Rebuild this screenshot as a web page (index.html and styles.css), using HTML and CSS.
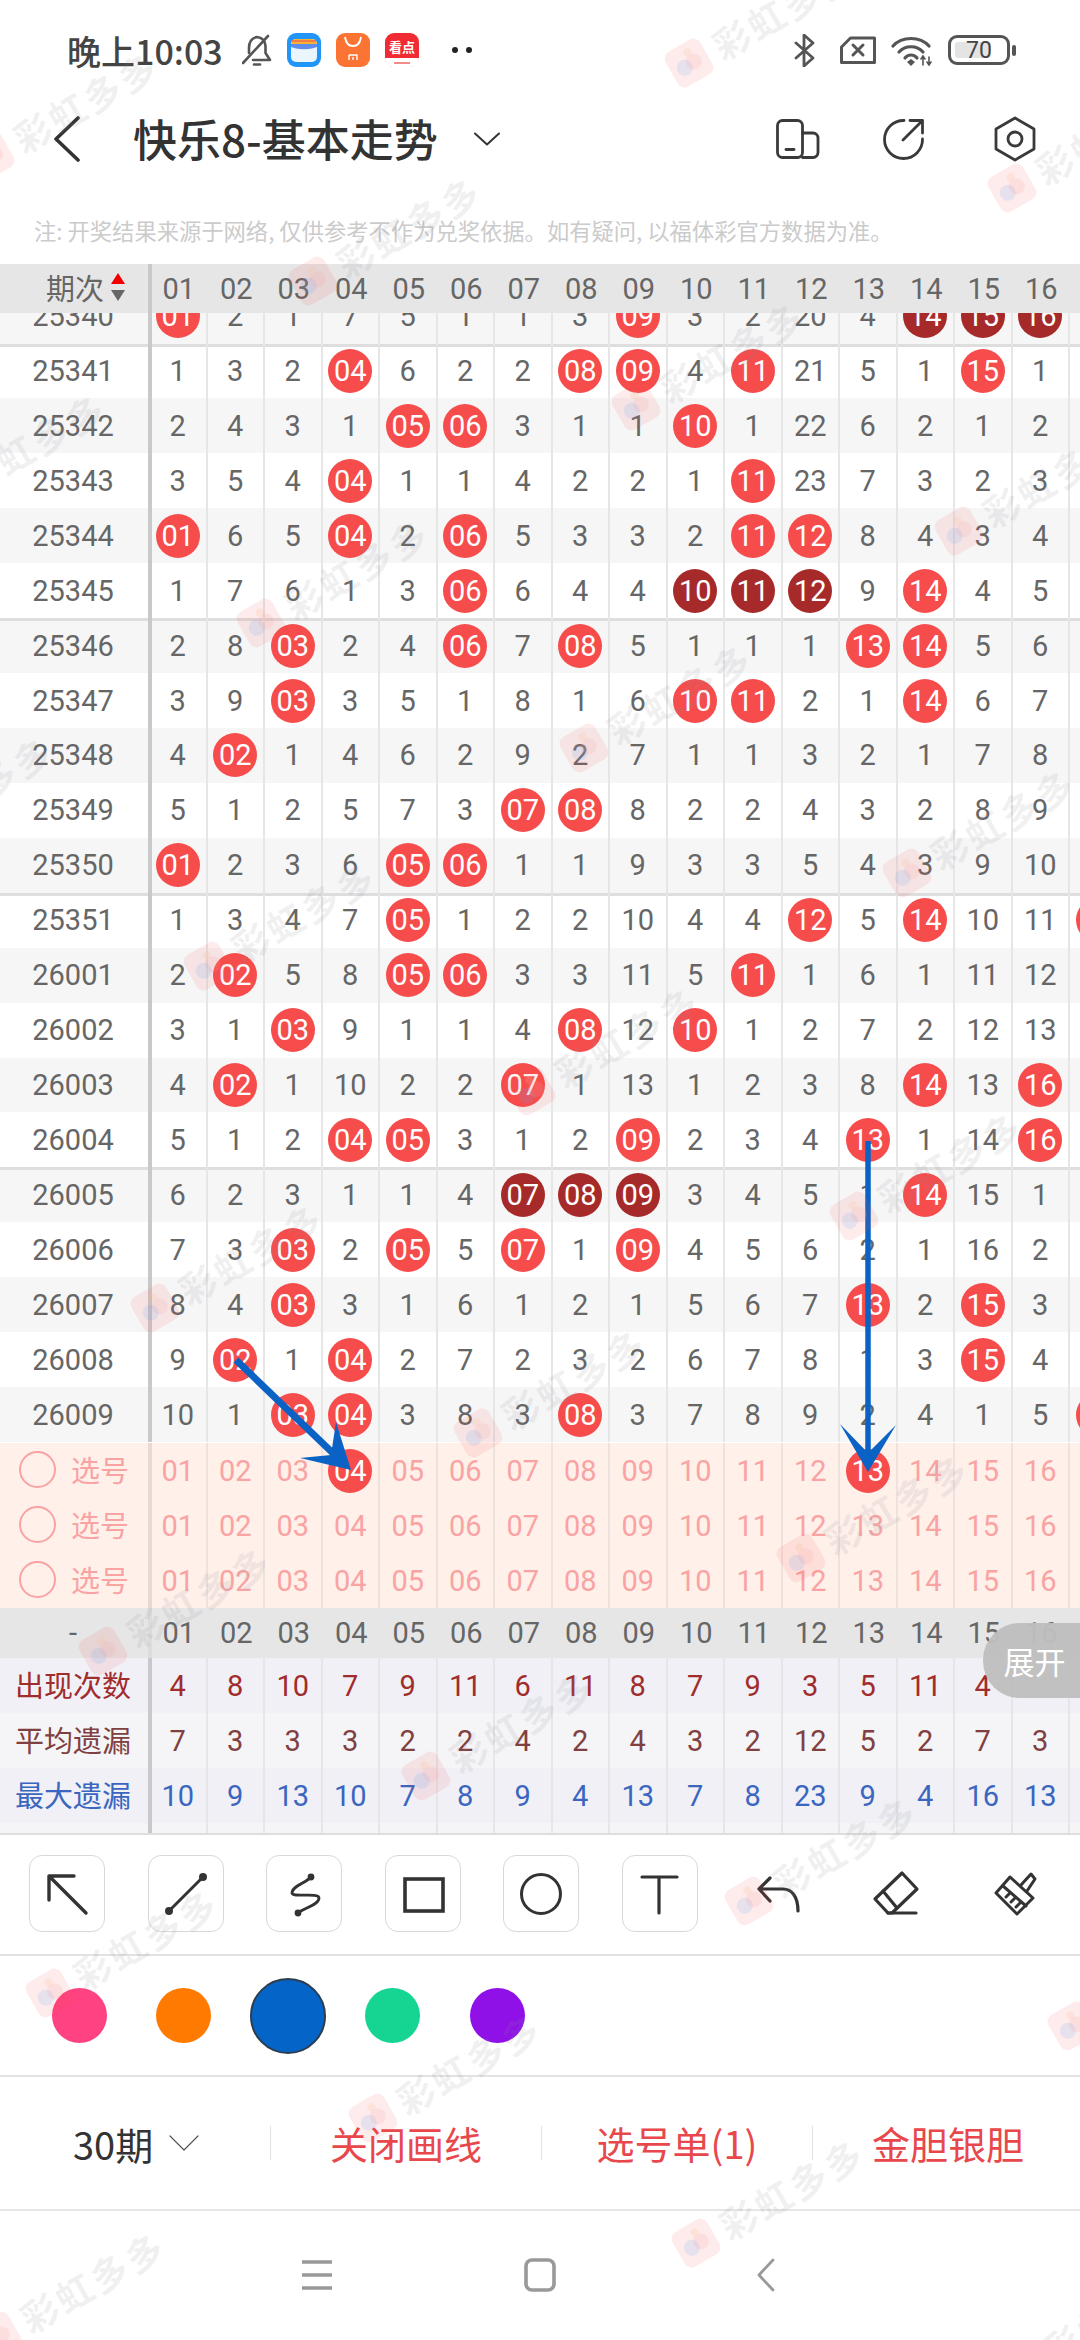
FILE: index.html
```html
<!DOCTYPE html>
<html lang="zh-CN">
<head>
    <meta charset="UTF-8">
    <meta name="viewport" content="width=device-width, initial-scale=1.0">
    <title>快乐8-基本走势</title>
    <link rel="stylesheet" href="styles.css">
</head>
<body>
    <header class="status-bar">
        <div class="status-left">
            <span class="status-time">晚上10:03</span>
            <svg class="bell" width="30" height="32" viewBox="0 0 30 32" fill="none" stroke="#555" stroke-width="2.6" stroke-linecap="round" stroke-linejoin="round"><path d="M7 19V14C7 8 10 4 15 3C20 3.5 23 7 23.500 12V19L28 26H11"/><path d="M12 30.500H18"/><path d="M1 29L26 2"/></svg>
            <svg class="app-icon" width="34" height="34" viewBox="0 0 34 34"><rect width="34" height="34" rx="9" fill="#2196f8"/><rect x="4" y="6" width="26" height="23" rx="5" fill="#eaf5fe"/><path d="M4 11a5 5 0 0 1 5-5h16a5 5 0 0 1 5 5z" fill="#f9b233"/><path d="M4 11h26v3c-8 3-18 3-26 0z" fill="#5e8df0"/><path d="M5 8h24" stroke="#ef6a4a" stroke-width="1.500"/></svg>
            <svg class="app-icon" width="34" height="34" viewBox="0 0 34 34"><rect width="34" height="34" rx="9" fill="#fb7434"/><path d="M9 4c1 7 4 9 8 9s7-2 8-9" fill="none" stroke="#fff" stroke-width="1.800"/><path d="M13 22h8v5M13 22v5M17 24v3" fill="none" stroke="#fff" stroke-width="1.400"/></svg>
            <svg class="app-icon" width="34" height="34" viewBox="0 0 34 34"><rect width="34" height="34" rx="9" fill="#f12b33"/><path d="M0 25h34v1a8 8 0 0 1-8 8H8a8 8 0 0 1-8-8z" fill="#fff"/><text class="app-icon-label" x="17" y="19">看点</text><path d="M9 30h16" stroke="#e66" stroke-width="1.500"/></svg>
            <span class="status-dots"><i></i><i></i></span>
        </div>
        <div class="status-right">
            <svg class="bluetooth" width="21" height="33" viewBox="0 0 21 33" fill="none" stroke="#555" stroke-width="2.800" stroke-linejoin="round" stroke-linecap="round"><path d="M2 9L19 24L10 32V1L19 9L2 24"/></svg>
            <svg width="36" height="28" viewBox="0 0 36 28" fill="none" stroke="#555" stroke-width="3" stroke-linejoin="round"><path d="M1.500 11L10.500 2H34.500V26.500H1.500Z"/><path d="M13 9L23 19M23 9L13 19" stroke-linecap="round"/></svg>
            <svg width="42" height="31" viewBox="0 0 42 31" fill="none" stroke="#555" stroke-width="3.200" stroke-linecap="round"><path d="M2 11C11 1 29 1 38 11"/><path d="M8 17C14 10 26 10 32 17"/><path d="M14 23C17 19 23 19 26 23"/><path d="M16 27L20 24L24 27L20 31Z" fill="#555" stroke="none"/><path d="M32 21V30M38 22V30M30 24L32 21L34 24M36 27L38 30L40 27" stroke-width="1.600"/></svg>
            <div class="battery"><div class="battery-body"><span class="battery-fill"></span><span class="battery-level">70</span></div><span class="battery-cap"></span></div>
        </div>
    </header>

    <nav class="title-bar">
        <svg width="26" height="46" viewBox="0 0 26 46" fill="none" stroke="#333" stroke-width="3.600" stroke-linecap="round" stroke-linejoin="round"><path d="M24 2L2 23L24 44"/></svg>
        <h1 class="page-title">快乐8-基本走势</h1>
        <svg class="title-caret" width="26" height="14" viewBox="0 0 26 14" fill="none" stroke="#333" stroke-width="2" stroke-linecap="round" stroke-linejoin="round"><path d="M1 1.500L13 12.500L25 1.500"/></svg>
        <div class="title-actions">
            <svg width="44" height="40" viewBox="0 0 44 40" fill="none" stroke="#3a3a3a" stroke-width="2.800" stroke-linecap="round" stroke-linejoin="round"><rect x="1.500" y="1.500" width="25" height="37" rx="5"/><path d="M26.500 14H37a5 5 0 0 1 5 5V33.500a5 5 0 0 1-5 5H26.500"/><path d="M10 30.500H18"/></svg>
            <svg width="42" height="42" viewBox="0 0 42 42" fill="none" stroke="#3a3a3a" stroke-width="2.800" stroke-linecap="round" stroke-linejoin="round"><path d="M22 2.500A19 19 0 1 0 40.500 21"/><path d="M21 22L40.500 2.500M28 2.500H40.500V15"/></svg>
            <svg class="settings-icon" width="42" height="46" viewBox="0 0 42 46" fill="none" stroke="#3a3a3a" stroke-width="2.800" stroke-linejoin="round"><path d="M21 2L40 13V33L21 44L2 33V13Z"/><circle cx="21" cy="23" r="7"/></svg>
        </div>
    </nav>

    <p class="notice">注: 开奖结果来源于网络, 仅供参考不作为兑奖依据。如有疑问, 以福体彩官方数据为准。</p>

    <section class="chart">
        <div class="chart-row chart-head" id="topHead">
            <div class="row-label sort-label">期次<span class="sort-arrows"><i class="sort-up"></i><i class="sort-down"></i></span></div>
        </div>
        <div class="chart-body" id="chartBody"></div>
        <div id="pickRows"></div>
        <div class="chart-row chart-head chart-head-low" id="lowHead">
            <div class="row-label">-</div>
        </div>
        <div class="stats" id="statRows"></div>
    </section>

    <section class="draw-tools">
        <button class="tool tool-boxed"><svg width="76" height="76" viewBox="0 0 76 76" fill="none" stroke="#333" stroke-width="3.400" stroke-linecap="round" stroke-linejoin="round"><path d="M20 44V20H45M20 20L57 57"/></svg></button>
        <button class="tool tool-boxed"><svg width="76" height="76" viewBox="0 0 76 76" fill="#333" stroke="#333" stroke-width="3" stroke-linecap="round"><path d="M21 55L55 21"/><circle cx="21" cy="55" r="2.500"/><circle cx="55" cy="21" r="2.500"/></svg></button>
        <button class="tool tool-boxed"><svg width="76" height="76" viewBox="0 0 76 76" fill="none" stroke="#333" stroke-width="2.800" stroke-linecap="round"><path d="M45 21C40 27 26 30 26 37C26 42 53 36 53 42C53 49 38 52 32 57"/><circle cx="45" cy="21" r="2" fill="#333"/><circle cx="32" cy="57" r="2" fill="#333"/></svg></button>
        <button class="tool tool-boxed"><svg width="76" height="76" viewBox="0 0 76 76" fill="none" stroke="#333" stroke-width="3.600"><rect x="20" y="23" width="38" height="32"/></svg></button>
        <button class="tool tool-boxed"><svg width="76" height="76" viewBox="0 0 76 76" fill="none" stroke="#333" stroke-width="3"><circle cx="38" cy="38" r="19.500"/></svg></button>
        <button class="tool tool-boxed"><svg width="76" height="76" viewBox="0 0 76 76" fill="none" stroke="#333" stroke-width="3.200" stroke-linecap="round"><path d="M20 21H55M37 21V57"/></svg></button>
        <button class="tool"><svg width="76" height="76" viewBox="0 0 76 76" fill="none" stroke="#333" stroke-width="3.200" stroke-linecap="round" stroke-linejoin="round"><path d="M29 22L18 33L29 45M18 33H42C51 33 57 41 57 55"/></svg></button>
        <button class="tool"><svg width="76" height="76" viewBox="0 0 76 76" fill="none" stroke="#333" stroke-width="3.200" stroke-linecap="round" stroke-linejoin="round"><path d="M43 17L58 33L33 57H29L16 43Z"/><path d="M24 35L38 52M29 57H57"/></svg></button>
        <button class="tool"><svg width="76" height="76" viewBox="0 0 76 76" fill="none" stroke="#333" stroke-width="3" stroke-linecap="round" stroke-linejoin="round"><path d="M18 37L32 21L55 42L39 58Z"/><path d="M43 29L53 18L57 23L49 35"/><path d="M25 30L48 50M28 41L32 37M33 46L37 42M38 51L42 47"/></svg></button>
    </section>

    <section class="color-picker">
        <div class="swatch-slot"><span class="swatch swatch-pink"></span></div>
        <div class="swatch-slot"><span class="swatch swatch-orange"></span></div>
        <div class="swatch-slot"><span class="swatch swatch-blue swatch-active"></span></div>
        <div class="swatch-slot"><span class="swatch swatch-green"></span></div>
        <div class="swatch-slot"><span class="swatch swatch-purple"></span></div>
    </section>

    <section class="action-bar">
        <div class="action-period">30期<svg width="30" height="16" viewBox="0 0 30 16" fill="none" stroke="#555" stroke-width="1.200" stroke-linecap="round" stroke-linejoin="round"><path d="M1 1L15 15L29 1"/></svg></div>
        <div class="action-item">关闭画线</div>
        <div class="action-item">选号单(1)</div>
        <div class="action-item">金胆银胆</div>
    </section>

    <footer class="nav-bar">
        <svg width="32" height="32" viewBox="0 0 32 32" fill="none" stroke="#999" stroke-width="3.600"><path d="M1 3H31M1 16H31M1 29H31"/></svg>
        <svg width="32" height="34" viewBox="0 0 32 34" fill="none" stroke="#999" stroke-width="3.600"><rect x="2" y="2" width="28" height="30" rx="6"/></svg>
        <svg class="nav-back" width="20" height="34" viewBox="0 0 20 34" fill="none" stroke="#999" stroke-width="2.800" stroke-linecap="round" stroke-linejoin="round"><path d="M17 2L3 17L17 32"/></svg>
    </footer>

    <!-- lines drawn by the user on top of the chart -->
    <svg class="drawing" width="1080" height="2340" viewBox="0 0 1080 2340">
        <path d="M236 1360L338 1458" stroke="#0a62c4" stroke-width="7" fill="none"/>
        <path d="M351 1470L336 1422L331 1455L300 1458Z" fill="#0a62c4"/>
        <path d="M868 1141V1455" stroke="#0a62c4" stroke-width="5.500" fill="none"/>
        <path d="M868 1472L840 1424L868 1453L896 1425Z" fill="#0a62c4"/>
    </svg>

    <button class="expand-tab">展开</button>

    <div class="watermarks" id="watermarks"></div>

    <script src="script.js"></script>
</body>
</html>
```

FILE: styles.css
```css
* {
    box-sizing: border-box;
}
html, body {
    width: 1080px;
    height: 2340px;
    margin: 0;
    padding: 0;
    overflow: hidden;
}
body {
    position: relative;
    background-color: #fff;
    color: #666;
    font-family: Roboto, "Noto Sans CJK SC", sans-serif;
    font-size: 29px;
}
button {
    padding: 0;
    border: none;
    background: none;
    font-family: inherit;
}
svg {
    display: block;
}

/* status bar */
.status-bar {
    display: flex;
    justify-content: space-between;
    align-items: center;
    height: 100px;
    padding: 0 64px 0 67px;
}
.status-left, .status-right {
    display: flex;
    align-items: center;
}
.status-time {
    width: 175px;
    color: #444;
    font-family: "Noto Sans CJK SC", sans-serif;
    font-size: 34px;
    font-weight: 500;
    white-space: nowrap;
}
.app-icon {
    margin-left: 15px;
}
.app-icon-label {
    fill: #fff;
    font-family: "Noto Sans CJK SC", sans-serif;
    font-size: 13px;
    font-weight: 700;
    text-anchor: middle;
}
.status-dots {
    display: flex;
    gap: 8px;
    margin-left: 33px;
}
.status-dots i {
    width: 6px;
    height: 6px;
    border-radius: 50%;
    background-color: #222;
}
.status-right {
    gap: 15px;
}
.bluetooth {
    margin-right: 10px;
}
.battery {
    display: flex;
    align-items: center;
    gap: 2px;
}
.battery-body {
    position: relative;
    display: flex;
    justify-content: center;
    align-items: center;
    width: 62px;
    height: 30px;
    border: 3px solid #555;
    border-radius: 9px;
    color: #444;
    font-size: 23px;
}
.battery-fill {
    position: absolute;
    left: 4px;
    top: 4px;
    bottom: 4px;
    width: 36px;
    border-radius: 3px;
    background-color: #e4e4e4;
}
.battery-level {
    position: relative;
}
.battery-cap {
    width: 4px;
    height: 11px;
    border-radius: 2px;
    background-color: #555;
}

/* title bar */
.title-bar {
    display: flex;
    align-items: center;
    height: 78px;
    padding: 0 44px 0 54px;
}
.page-title {
    margin: 0 0 2px 53px;
    color: #333;
    font-family: "Noto Sans CJK SC", sans-serif;
    font-size: 44px;
    font-weight: 500;
    white-space: nowrap;
}
.title-caret {
    margin-left: 36px;
}
.title-actions {
    display: flex;
    align-items: center;
    gap: 62px;
    margin-left: auto;
}
.settings-icon {
    margin-left: 8px;
}

.notice {
    margin: 0;
    height: 86px;
    padding: 37px 0 0 34px;
    color: #cbcbcb;
    font-family: "Noto Sans CJK SC", sans-serif;
    font-size: 22.3px;
    line-height: 30px;
    white-space: nowrap;
}

/* chart */
.chart {
    overflow: hidden;
}
.chart-row {
    display: grid;
    grid-template-columns: 150px repeat(17, 57.5px);
    height: 54.93px;
    background-color: #fff;
}
.chart-row.row-alt {
    background-color: #f6f6f6;
}
.chart-row.row-group {
    box-shadow: inset 0 3px 0 #dedede;
}
.row-label {
    display: flex;
    justify-content: center;
    align-items: center;
    padding-right: 2px;
    border-right: 2px solid #c9c9c9;
    box-shadow: 2px 0 0 #c9c9c9;
    white-space: nowrap;
}
.cell {
    display: flex;
    justify-content: center;
    align-items: center;
    border-right: 2px solid #e6e6e6;
}
.ball {
    display: flex;
    flex: none;
    justify-content: center;
    align-items: center;
    width: 44px;
    height: 44px;
    border-radius: 50%;
    background-color: #f64c4c;
    color: #fff;
}
.ball-dark {
    background-color: #a62a2a;
}

.chart-head {
    height: 49px;
    background-color: #e6e6e6;
}
.chart-head .cell {
    border-right: none;
}
.chart-head-low {
    height: 50px;
}
.chart-head-low .row-label {
    border-right-color: #dcdcdc;
    box-shadow: 2px 0 0 #dcdcdc;
}
.sort-label {
    justify-content: flex-start;
    padding-left: 46px;
    padding-bottom: 3px;
    color: #666;
}
.sort-arrows {
    display: flex;
    flex-direction: column;
    gap: 6px;
    margin-left: 7px;
}
.sort-arrows i {
    width: 0;
    height: 0;
    border-left: 7.5px solid transparent;
    border-right: 7.5px solid transparent;
}
.sort-up {
    border-bottom: 11px solid #f00000;
}
.sort-down {
    border-top: 11px solid #666;
}

.chart-body {
    height: 1130px;
    overflow: hidden;
}
.chart-body .chart-row:first-child {
    margin-top: -24.4px;
}

/* pick rows */
.pick-row {
    height: 55px;
    background-color: #fff0ea;
    color: #f9a3a3;
}
.pick-row .row-label {
    justify-content: flex-start;
    gap: 15px;
    padding-left: 19px;
    padding-bottom: 3px;
    border-right-color: #e9d8d4;
    box-shadow: 2px 0 0 #e9d8d4;
}
.pick-row .cell {
    border-right-color: #ece2de;
}
.pick-circle {
    width: 37px;
    height: 37px;
    border: 2.5px solid #f9a3a3;
    border-radius: 50%;
}

/* stats */
.stats {
    height: 177px;
    overflow: hidden;
    border-bottom: 2px solid #dedede;
    background-color: #f5f5f7;
}
.stat-row {
    height: 55px;
    background-color: #f5f5f7;
}
.stat-row .row-label {
    padding-bottom: 3px;
}
.stat-count {
    background-color: #f0f0f6;
    color: #a02c2c;
}
.stat-avg {
    color: #80403f;
}
.stat-max {
    background-color: #f0f0f6;
    color: #3a66c0;
}
.stat-tail {
    height: 10px;
}

/* drawing tools */
.draw-tools {
    display: flex;
    gap: 42.6px;
    height: 121px;
    padding: 20px 0 0 29px;
    border-bottom: 2px solid #e2e2e2;
}
.tool {
    flex: none;
    width: 76px;
    height: 77px;
    border-radius: 13px;
}
.tool-boxed {
    border: 1px solid #d8d8d8;
}
.tool-boxed svg {
    margin: -1px;
}

.color-picker {
    display: flex;
    align-items: center;
    height: 121px;
    padding-left: 27px;
    border-bottom: 2px solid #e2e2e2;
}
.swatch-slot {
    display: flex;
    justify-content: center;
    width: 104.5px;
}
.swatch {
    width: 55px;
    height: 55px;
    border-radius: 50%;
}
.swatch-pink {
    background-color: #ff4281;
}
.swatch-orange {
    background-color: #ff7a00;
}
.swatch-blue {
    background-color: #0564c8;
}
.swatch-green {
    background-color: #16d592;
}
.swatch-purple {
    background-color: #9010e8;
}
.swatch-active {
    width: 76px;
    height: 76px;
    border: 2px solid #2c3e50;
}

/* actions */
.action-bar {
    display: grid;
    grid-template-columns: 270px repeat(3, 271px);
    align-items: center;
    height: 134px;
    border-bottom: 2px solid #e6e6e6;
    font-family: "Noto Sans CJK SC", sans-serif;
    font-size: 38px;
}
.action-period {
    display: flex;
    align-items: center;
    gap: 16px;
    padding-left: 73px;
    color: #333;
}
.action-item {
    height: 34px;
    border-left: 1.5px solid #e2e2e2;
    color: #e8474c;
    line-height: 34px;
    text-align: center;
}

.nav-bar {
    display: flex;
    align-items: center;
    height: 129px;
    padding: 0 0 1px 301px;
    gap: 191px;
}
.nav-back {
    margin-left: 9px;
}

/* things lying over the page */
.drawing {
    position: absolute;
    left: 0;
    top: 0;
    pointer-events: none;
}
.expand-tab {
    position: absolute;
    right: 0;
    top: 1623px;
    width: 97px;
    height: 75px;
    padding-left: 6px;
    border-radius: 37px 0 0 37px;
    background-color: rgba(190, 190, 190, 0.96);
    color: #fff;
    font-family: "Noto Sans CJK SC", sans-serif;
    font-size: 31px;
}
.watermarks {
    position: absolute;
    inset: 0;
    overflow: hidden;
    pointer-events: none;
}
.watermark {
    position: absolute;
    display: flex;
    align-items: center;
    gap: 9px;
    margin: -21px 0 0 -21px;
    transform: rotate(-30deg);
    transform-origin: 21px 21px;
    color: rgba(140, 140, 150, 0.13);
    font-family: "Noto Sans CJK SC", sans-serif;
    font-size: 37px;
    font-weight: 700;
    letter-spacing: 3px;
    line-height: 42px;
    white-space: nowrap;
}
```

FILE: script.js
```js
// * = drawn number, # = repeated number (dark ball)
const draws = [
    ["25340", "*01 2 1 7 5 1 1 3 *09 3 2 20 4 #14 #15 #16"],
    ["25341", "1 3 2 *04 6 2 2 *08 *09 4 *11 21 5 1 *15 1"],
    ["25342", "2 4 3 1 *05 *06 3 1 1 *10 1 22 6 2 1 2"],
    ["25343", "3 5 4 *04 1 1 4 2 2 1 *11 23 7 3 2 3"],
    ["25344", "*01 6 5 *04 2 *06 5 3 3 2 *11 *12 8 4 3 4"],
    ["25345", "1 7 6 1 3 *06 6 4 4 #10 #11 #12 9 *14 4 5"],
    ["25346", "2 8 *03 2 4 *06 7 *08 5 1 1 1 *13 *14 5 6"],
    ["25347", "3 9 *03 3 5 1 8 1 6 *10 *11 2 1 *14 6 7"],
    ["25348", "4 *02 1 4 6 2 9 2 7 1 1 3 2 1 7 8"],
    ["25349", "5 1 2 5 7 3 *07 *08 8 2 2 4 3 2 8 9"],
    ["25350", "*01 2 3 6 *05 *06 1 1 9 3 3 5 4 3 9 10"],
    ["25351", "1 3 4 7 *05 1 2 2 10 4 4 *12 5 *14 10 11 *17"],
    ["26001", "2 *02 5 8 *05 *06 3 3 11 5 *11 1 6 1 11 12"],
    ["26002", "3 1 *03 9 1 1 4 *08 12 *10 1 2 7 2 12 13"],
    ["26003", "4 *02 1 10 2 2 *07 1 13 1 2 3 8 *14 13 *16"],
    ["26004", "5 1 2 *04 *05 3 1 2 *09 2 3 4 *13 1 14 *16"],
    ["26005", "6 2 3 1 1 4 #07 #08 #09 3 4 5 1 *14 15 1"],
    ["26006", "7 3 *03 2 *05 5 *07 1 *09 4 5 6 2 1 16 2"],
    ["26007", "8 4 *03 3 1 6 1 2 1 5 6 7 *13 2 *15 3"],
    ["26008", "9 *02 1 *04 2 7 2 3 2 6 7 8 1 3 *15 4"],
    ["26009", "10 1 *03 *04 3 8 3 *08 3 7 8 9 2 4 1 5 *17"]
];
const headNumbers = "01 02 03 04 05 06 07 08 09 10 11 12 13 14 15 16".split(" ");

const cellsHtml = (values) => {
    let html = "";
    for (let i = 0; i < 17; i++) {
        const value = values[i] || "";
        if (value[0] === "*") {
            html += `<div class="cell"><span class="ball">${value.slice(1)}</span></div>`;
        } else if (value[0] === "#") {
            html += `<div class="cell"><span class="ball ball-dark">${value.slice(1)}</span></div>`;
        } else {
            html += `<div class="cell">${value}</div>`;
        }
    }
    return html;
};

document.getElementById("topHead").insertAdjacentHTML("beforeend", cellsHtml(headNumbers));
document.getElementById("lowHead").insertAdjacentHTML("beforeend", cellsHtml(headNumbers));

// the list is scrolled: the first row is half hidden under the header
document.getElementById("chartBody").innerHTML = draws.map(([issue, numbers], i) => {
    const alt = i % 2 === 0 ? " row-alt" : "";
    const group = i % 5 === 1 ? " row-group" : "";
    return `<div class="chart-row${alt}${group}"><div class="row-label">${issue}</div>${cellsHtml(numbers.split(" "))}</div>`;
}).join("");

const picks = [
    headNumbers.map((n) => (n === "04" || n === "13" ? "*" + n : n)),
    headNumbers,
    headNumbers
];
document.getElementById("pickRows").innerHTML = picks.map((numbers) =>
    `<div class="chart-row pick-row"><div class="row-label"><span class="pick-circle"></span>选号</div>${cellsHtml(numbers)}</div>`
).join("");

const stats = [
    ["stat-count", "出现次数", "4 8 10 7 9 11 6 11 8 7 9 3 5 11 4"],
    ["stat-avg", "平均遗漏", "7 3 3 3 2 2 4 2 4 3 2 12 5 2 7 3"],
    ["stat-max", "最大遗漏", "10 9 13 10 7 8 9 4 13 7 8 23 9 4 16 13"]
];
document.getElementById("statRows").innerHTML = stats.map(([name, label, numbers]) =>
    `<div class="chart-row stat-row ${name}"><div class="row-label">${label}</div>${cellsHtml(numbers.split(" "))}</div>`
).join("") + `<div class="chart-row stat-row stat-tail"><div class="row-label"></div>${cellsHtml([])}</div>`;

// watermark repeats on a skewed lattice
const logo = `<svg width="42" height="42" viewBox="0 0 42 42" style="flex:none"><rect x="1" y="1" width="40" height="40" rx="8" fill="#f85050" fill-opacity="0.11"/><circle cx="15" cy="23" r="8" fill="#6aa8f0" fill-opacity="0.16"/><circle cx="26" cy="22" r="8" fill="#f8a0a0" fill-opacity="0.18"/><circle cx="25" cy="11" r="4" fill="#f8c090" fill-opacity="0.22"/></svg>`;
const marks = document.getElementById("watermarks");
for (let i = -8; i <= 8; i++) {
    for (let j = -8; j <= 8; j++) {
        const x = 689 + 323 * i + 52.7 * j;
        const y = 63 + 125 * i - 342.5 * j;
        if (x < -220 || x > 1100 || y < -30 || y > 2460) continue;
        marks.insertAdjacentHTML("beforeend", `<div class="watermark" style="left:${x}px;top:${y}px">${logo}<span>彩虹多多</span></div>`);
    }
}
```
